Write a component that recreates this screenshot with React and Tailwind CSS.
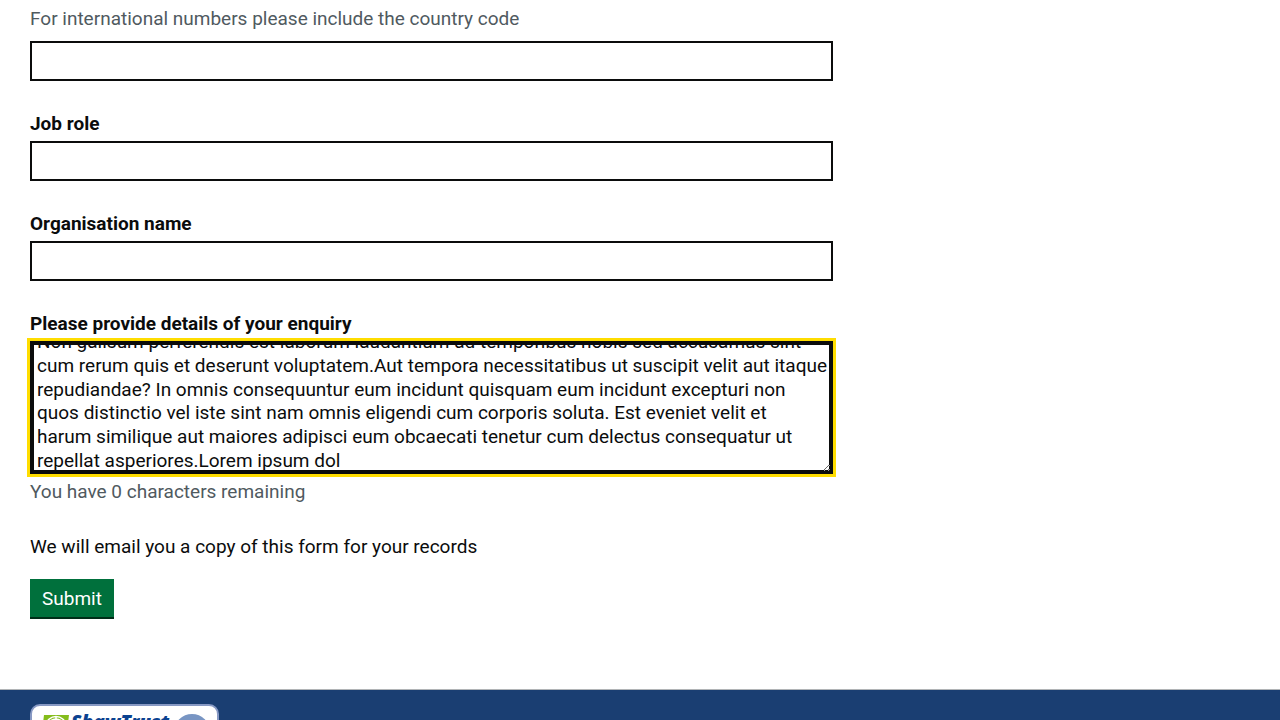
import { useLayoutEffect, useRef } from "react";

const ENQUIRY =
  "Non galisum perferendis est laborum laudantium ad temporibus nobis sed accusamus sint cum rerum quis et deserunt voluptatem.Aut tempora necessitatibus ut suscipit velit aut itaque repudiandae? In omnis consequuntur eum incidunt quisquam eum incidunt excepturi non quos distinctio vel iste sint nam omnis eligendi cum corporis soluta. Est eveniet velit et\nharum similique aut maiores adipisci eum obcaecati tenetur cum delectus consequatur ut repellat asperiores.Lorem ipsum dol";

const inputClass =
  "block h-10 w-full rounded-none border-2 border-[#0b0c0c] bg-white p-[5px] text-[19px] leading-tight";

function Field({ id, label }) {
  return (
    <div className="mb-[30px]">
      <label htmlFor={id} className="mb-[5px] block font-bold">
        {label}
      </label>
      <input id={id} name={id} type="text" className={inputClass} />
    </div>
  );
}

function EnquiryField() {
  const ref = useRef(null);

  useLayoutEffect(() => {
    ref.current.scrollTop = 18;
  }, []);

  return (
    <div className="mb-[30px]">
      <label htmlFor="enquiry" className="mb-[5px] block font-bold">
        Please provide details of your enquiry
      </label>
      <textarea
        id="enquiry"
        ref={ref}
        rows={5}
        defaultValue={ENQUIRY}
        aria-describedby="enquiry-info"
        className="mb-[5px] block w-full resize-y rounded-none border-2 border-[#0b0c0c] bg-white py-[5px] pr-[2px] pl-[5px] text-[19px] leading-tight shadow-[inset_0_0_0_2px_#0b0c0c] outline-[3px] outline-[#ffdd00] outline-solid [scrollbar-width:none]"
      />
      <div id="enquiry-info" className="text-[#505a5f]">
        You have 0 characters remaining
      </div>
    </div>
  );
}

function ShawTrustLogo() {
  return (
    <svg width="189" height="60" viewBox="0 0 189 60" role="img" aria-label="Shaw Trust">
      <rect x="1" y="1" width="187" height="58" rx="9" fill="#fff" stroke="#8799c4" strokeWidth="2" />
      <path d="M14 11H39L36 36H11Z" fill="#84bd1b" />
      <g fill="none" stroke="#fff" strokeWidth="1.6">
        <ellipse cx="26" cy="21" rx="9.5" ry="8.5" />
        <path d="M26 12V31M18 19Q26 11 34 19" />
      </g>
      <text
        x="41"
        y="25"
        fill="#0b4290"
        fontFamily="'Open Sans', sans-serif"
        fontSize="19"
        fontStyle="italic"
        fontWeight="800"
      >
        ShawTrust
      </text>
      <circle cx="162" cy="28" r="18" fill="#7895c3" />
    </svg>
  );
}

export default function App() {
  return (
    <div className="flex h-screen flex-col overflow-hidden bg-white font-[Roboto,sans-serif] text-[19px] leading-[25px] text-[#0b0c0c]">
      <main className="mx-[15px] shrink-0 pt-[6px] pb-[70px]">
        <form className="w-2/3 px-[15px]" onSubmit={(e) => e.preventDefault()}>
          <div className="mb-[30px]">
            <label htmlFor="phone" className="mb-[10px] block text-[#505a5f]">
              For international numbers please include the country code
            </label>
            <input id="phone" name="phone" type="tel" className={inputClass} />
          </div>
          <Field id="job-role" label="Job role" />
          <Field id="organisation" label="Organisation name" />
          <EnquiryField />
          <p className="mb-5">We will email you a copy of this form for your records</p>
          <button
            type="submit"
            className="mb-[2px] block h-[38px] bg-[#00703c] px-3 pt-[2px] text-white shadow-[0_2px_0_#002d18]"
          >
            Submit
          </button>
        </form>
      </main>
      <footer className="flex-1 overflow-hidden border-t border-[#b1b4b6] bg-[#1a3e72] px-[30px] pt-[14px]">
        <a href="#shaw-trust" className="inline-block">
          <ShawTrustLogo />
        </a>
      </footer>
    </div>
  );
}
